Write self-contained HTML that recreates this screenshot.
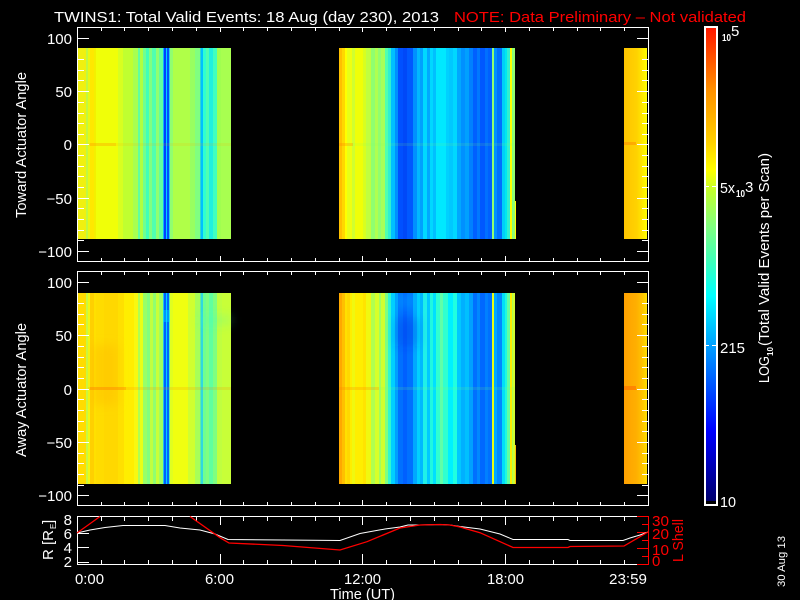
<!DOCTYPE html>
<html><head><meta charset="utf-8"><title>TWINS1</title>
<style>
html,body{margin:0;padding:0;background:#000;width:800px;height:600px;overflow:hidden}
svg{display:block}
text{font-family:"Liberation Sans",sans-serif;fill:#fff;font-size:15px}
.r text,text.r{fill:#f00}
.p1 rect{y:48px;height:191px}
.p2 rect{y:293px;height:191px}
</style></head><body>
<svg width="800" height="600" viewBox="0 0 800 600" xmlns="http://www.w3.org/2000/svg">
<defs>
<linearGradient id="cb" x1="0" y1="28" x2="0" y2="502" gradientUnits="userSpaceOnUse">
<stop offset="0" stop-color="#ff1800"/><stop offset=".13" stop-color="#ff9000"/><stop offset=".24" stop-color="#ffd000"/><stop offset=".3" stop-color="#ffff00"/><stop offset=".345" stop-color="#c0ff30"/><stop offset=".42" stop-color="#80ff80"/><stop offset=".49" stop-color="#40ffb8"/><stop offset=".565" stop-color="#00ffff"/><stop offset=".67" stop-color="#00a0ff"/><stop offset=".85" stop-color="#0000ff"/><stop offset="1" stop-color="#00006a"/>
</linearGradient>
<linearGradient id="e1" x1="624" x2="647" y1="0" y2="0" gradientUnits="userSpaceOnUse"><stop offset="0" stop-color="#ffc400"/><stop offset=".55" stop-color="#ffd200"/><stop offset=".8" stop-color="#ffe800"/><stop offset="1" stop-color="#ffff00"/></linearGradient>
<linearGradient id="e2" x1="624" x2="647" y1="0" y2="0" gradientUnits="userSpaceOnUse"><stop offset="0" stop-color="#ffa000"/><stop offset=".55" stop-color="#ffb000"/><stop offset=".8" stop-color="#ffc400"/><stop offset="1" stop-color="#ffe000"/></linearGradient>
<filter id="soft" x="-50%" y="-50%" width="200%" height="200%"><feGaussianBlur stdDeviation="5"/></filter>
<clipPath id="c2"><rect x="78" y="293" width="437" height="191"/></clipPath>
</defs>
<g shape-rendering="crispEdges">
<g class="p1">
<rect x="78" width="8" fill="#f0f010"/><rect x="86" width="2" fill="#c0f840"/><rect x="88" width="2" fill="#e8f810"/><rect x="90" width="4" fill="#ffe800"/><rect x="94" width="2" fill="#f4f000"/><rect x="96" width="22" fill="#f0ff08"/><rect x="118" width="5" fill="#d8ff20"/><rect x="123" width="10" fill="#c0ff30"/><rect x="133" width="5" fill="#a8ff50"/><rect x="138" width="2" fill="#60ffa0"/><rect x="140" width="3" fill="#b0ff40"/><rect x="143" width="3" fill="#70ff90"/><rect x="146" width="3" fill="#40ffb8"/><rect x="149" width="3" fill="#80ff80"/><rect x="152" width="4" fill="#50ffb0"/><rect x="156" width="3" fill="#90ff70"/><rect x="159" width="4" fill="#60ffa0"/><rect x="163" width="1" fill="#10b0ff"/><rect x="164" width="2" fill="#0040ff"/><rect x="166" width="1" fill="#00d0ff"/><rect x="167" width="2" fill="#0050ff"/><rect x="169" width="1" fill="#30d0e0"/><rect x="170" width="3" fill="#90ff70"/><rect x="173" width="17" fill="#b0ff48"/><rect x="190" width="5" fill="#98ff60"/><rect x="195" width="5" fill="#80ff80"/><rect x="200" width="1" fill="#30d8d0"/><rect x="201" width="2" fill="#00c0ff"/><rect x="203" width="3" fill="#30ffd0"/><rect x="206" width="3" fill="#50ffb0"/><rect x="209" width="4" fill="#20f0e0"/><rect x="213" width="4" fill="#40ffc0"/><rect x="217" width="4" fill="#a0ff50"/><rect x="221" width="10" fill="#a8ff50"/>
<rect x="339" width="3" fill="#ffc000"/><rect x="342" width="3" fill="#ffd800"/><rect x="345" width="2" fill="#ffff00"/><rect x="347" width="3" fill="#e8ff18"/><rect x="350" width="2" fill="#f0ff10"/><rect x="352" width="3" fill="#d0ff30"/><rect x="355" width="8" fill="#f0ff08"/><rect x="363" width="3" fill="#d8ff20"/><rect x="366" width="5" fill="#c0ff40"/><rect x="371" width="4" fill="#90ff70"/><rect x="375" width="3" fill="#b0ff50"/><rect x="378" width="3" fill="#90ff70"/><rect x="381" width="4" fill="#a8ff58"/><rect x="385" width="3" fill="#50ffb0"/><rect x="388" width="3" fill="#30f0d0"/><rect x="391" width="4" fill="#00c0ff"/><rect x="395" width="3" fill="#0090ff"/><rect x="398" width="5" fill="#0050ff"/><rect x="403" width="4" fill="#0048f8"/><rect x="407" width="6" fill="#0058ff"/><rect x="413" width="4" fill="#0090ff"/><rect x="417" width="3" fill="#00b8ff"/><rect x="420" width="3" fill="#00a0ff"/><rect x="423" width="4" fill="#00d8ff"/><rect x="427" width="3" fill="#00a8ff"/><rect x="430" width="3" fill="#00d8ff"/><rect x="433" width="3" fill="#00c0ff"/><rect x="436" width="10" fill="#00e8ff"/><rect x="446" width="3" fill="#00d0ff"/><rect x="449" width="4" fill="#00c8ff"/><rect x="453" width="4" fill="#00d8ff"/><rect x="457" width="4" fill="#00a8ff"/><rect x="461" width="4" fill="#0090ff"/><rect x="465" width="4" fill="#00a0ff"/><rect x="469" width="4" fill="#0080ff"/><rect x="473" width="4" fill="#0060ff"/><rect x="477" width="3" fill="#0078ff"/><rect x="480" width="5" fill="#0058ff"/><rect x="485" width="3" fill="#0070ff"/><rect x="488" width="4" fill="#0060ff"/><rect x="492" width="2" fill="#90ff70"/><rect x="494" width="3" fill="#0090ff"/><rect x="497" width="5" fill="#0070ff"/><rect x="502" width="3" fill="#00d0f8"/><rect x="505" width="2" fill="#00e8f0"/><rect x="507" width="3" fill="#30f0d0"/><rect x="510" width="2" fill="#ffff00"/><rect x="512" width="1" fill="#80ff80"/><rect x="513" width="2" fill="#90ff70"/>
<rect x="515" style="y:201px;height:38px" width="1" fill="#ffff00"/>
<rect x="624" width="23" fill="url(#e1)"/>
</g>
<g class="p2">
<rect x="78" width="8" fill="#ffdc00"/><rect x="86" width="2" fill="#c8f840"/><rect x="88" width="2" fill="#f0f810"/><rect x="90" width="4" fill="#ffd000"/><rect x="94" width="2" fill="#ffe000"/><rect x="96" width="8" fill="#ffdc00"/><rect x="104" width="14" fill="#ffd800"/><rect x="118" width="6" fill="#ffe000"/><rect x="124" width="10" fill="#ffee00"/><rect x="134" width="4" fill="#f8f810"/><rect x="138" width="2" fill="#b0ff50"/><rect x="140" width="3" fill="#e8ff18"/><rect x="143" width="4" fill="#98ff68"/><rect x="147" width="3" fill="#80ff80"/><rect x="150" width="3" fill="#c0ff40"/><rect x="153" width="3" fill="#90ff70"/><rect x="156" width="3" fill="#c8ff38"/><rect x="159" width="4" fill="#a0ff60"/><rect x="163" width="1" fill="#20c0f0"/><rect x="164" width="2" fill="#0060ff"/><rect x="166" width="1" fill="#00d0ff"/><rect x="167" width="2" fill="#0068ff"/><rect x="169" width="1" fill="#60f0a0"/><rect x="170" width="3" fill="#e0ff20"/><rect x="173" width="15" fill="#f0ff10"/><rect x="188" width="7" fill="#d0ff30"/><rect x="195" width="5" fill="#a8ff58"/><rect x="200" width="1" fill="#60f0a0"/><rect x="201" width="2" fill="#30d8e0"/><rect x="203" width="3" fill="#70ff90"/><rect x="206" width="3" fill="#80ff80"/><rect x="209" width="4" fill="#60ffa0"/><rect x="213" width="4" fill="#80ff80"/><rect x="217" width="5" fill="#c0ff40"/><rect x="222" width="9" fill="#c8ff38"/>
<rect x="339" width="3" fill="#ffa800"/><rect x="342" width="3" fill="#ffc000"/><rect x="345" width="2" fill="#ffe000"/><rect x="347" width="3" fill="#ffd800"/><rect x="350" width="2" fill="#ffee00"/><rect x="352" width="3" fill="#f0f810"/><rect x="355" width="8" fill="#ffee00"/><rect x="363" width="3" fill="#ffe400"/><rect x="366" width="5" fill="#f0f810"/><rect x="371" width="4" fill="#b0ff50"/><rect x="375" width="4" fill="#d8ff28"/><rect x="379" width="2" fill="#a0ff60"/><rect x="381" width="4" fill="#d0ff30"/><rect x="385" width="3" fill="#80ff80"/><rect x="388" width="3" fill="#30f8d0"/><rect x="391" width="4" fill="#00d0ff"/><rect x="395" width="3" fill="#00a0ff"/><rect x="398" width="5" fill="#0070ff"/><rect x="403" width="4" fill="#0060ff"/><rect x="407" width="6" fill="#0070ff"/><rect x="413" width="4" fill="#00a8ff"/><rect x="417" width="3" fill="#00d0ff"/><rect x="420" width="3" fill="#00b8ff"/><rect x="423" width="4" fill="#20f0e8"/><rect x="427" width="3" fill="#00c8ff"/><rect x="430" width="3" fill="#20f8e0"/><rect x="433" width="3" fill="#00e0ff"/><rect x="436" width="4" fill="#30ffd0"/><rect x="440" width="3" fill="#60ffa8"/><rect x="443" width="5" fill="#30ffd0"/><rect x="448" width="5" fill="#00f0ff"/><rect x="453" width="4" fill="#20ffe0"/><rect x="457" width="4" fill="#00c8ff"/><rect x="461" width="4" fill="#00b0ff"/><rect x="465" width="4" fill="#00c0ff"/><rect x="469" width="4" fill="#00a0ff"/><rect x="473" width="4" fill="#0070ff"/><rect x="477" width="3" fill="#0088ff"/><rect x="480" width="5" fill="#0068ff"/><rect x="485" width="3" fill="#0080ff"/><rect x="488" width="4" fill="#0070ff"/><rect x="492" width="2" fill="#e8ff10"/><rect x="494" width="3" fill="#00a8ff"/><rect x="497" width="5" fill="#0088ff"/><rect x="502" width="3" fill="#00e0f8"/><rect x="505" width="2" fill="#20f8e0"/><rect x="507" width="3" fill="#60ffa0"/><rect x="510" width="2" fill="#ffee00"/><rect x="512" width="1" fill="#b0ff50"/><rect x="513" width="2" fill="#d0ff30"/>
<rect x="515" width="1" style="y:445px;height:39px" fill="#ffc000"/>
<rect x="624" width="23" fill="url(#e2)"/>
</g>
</g>
<!-- soft vertical structure, clipped to the data area -->
<g clip-path="url(#c2)"><g filter="url(#soft)">
<rect x="92" y="345" width="26" height="60" fill="#ffb000" opacity=".3"/>
<rect x="396" y="318" width="22" height="28" fill="#0030e0" opacity=".28"/>
<rect x="396" y="293" width="22" height="16" fill="#00c0ff" opacity=".3"/>
<rect x="200" y="316" width="31" height="8" fill="#40ffc0" opacity=".3"/>
</g></g>
<g shape-rendering="crispEdges">
<rect x="163" y="310" width="7" height="12" fill="#00f0ff" opacity=".35"/>
<rect x="88" y="143" width="143" height="3" fill="#ffa000" opacity=".13"/>
<rect x="90" y="143" width="26" height="3" fill="#ff9000" opacity=".25"/>
<rect x="339" y="143" width="14" height="3" fill="#ff8000" opacity=".3"/>
<rect x="353" y="143" width="162" height="3" fill="#80ff60" opacity=".12"/>
<rect x="624" y="142" width="12" height="3" fill="#ff8000" opacity=".45"/>
<rect x="88" y="387" width="143" height="3" fill="#ff8000" opacity=".18"/>
<rect x="90" y="387" width="36" height="3" fill="#ff8000" opacity=".3"/>
<rect x="339" y="387" width="40" height="3" fill="#ff8000" opacity=".25"/>
<rect x="379" y="387" width="136" height="3" fill="#80ff60" opacity=".14"/>
<rect x="624" y="386" width="12" height="4" fill="#ff6000" opacity=".5"/>
<!-- colour bar -->
<rect x="704" y="26" width="14" height="480" fill="#fff"/>
<rect x="706" y="28" width="10" height="476" fill="#000"/>
<rect x="706" y="28" width="10" height="473" fill="url(#cb)"/>
<rect x="706" y="186" width="3" height="1" fill="#fff"/><rect x="712" y="186" width="4" height="1" fill="#fff"/>
<rect x="706" y="345" width="3" height="1" fill="#fff"/><rect x="712" y="345" width="4" height="1" fill="#fff"/>
</g>
<!-- frames and ticks -->
<g fill="none" stroke="#fff" stroke-width="1" shape-rendering="crispEdges">
<path d="M77 27.5H648M77 261.5H648M77 271.5H648M77 505.5H648M77.5 27V262M77.5 271V506M648.5 27V262M648.5 271V506"/>
<path d="M101.5 28v3M124.5 28v3M148.5 28v3M172.5 28v3M196.5 28v3M220.5 28v4M243.5 28v3M267.5 28v3M291.5 28v3M315.5 28v3M339.5 28v3M362.5 28v4M386.5 28v3M410.5 28v3M434.5 28v3M458.5 28v3M481.5 28v3M505.5 28v4M529.5 28v3M553.5 28v3M577.5 28v3M600.5 28v3M624.5 28v3"/>
<path d="M101.5 258v3M124.5 258v3M148.5 258v3M172.5 258v3M196.5 258v3M220.5 256v5M243.5 258v3M267.5 258v3M291.5 258v3M315.5 258v3M339.5 258v3M362.5 256v5M386.5 258v3M410.5 258v3M434.5 258v3M458.5 258v3M481.5 258v3M505.5 256v5M529.5 258v3M553.5 258v3M577.5 258v3M600.5 258v3M624.5 258v3"/>
<path d="M101.5 272v3M124.5 272v3M148.5 272v3M172.5 272v3M196.5 272v3M220.5 272v4M243.5 272v3M267.5 272v3M291.5 272v3M315.5 272v3M339.5 272v3M362.5 272v4M386.5 272v3M410.5 272v3M434.5 272v3M458.5 272v3M481.5 272v3M505.5 272v4M529.5 272v3M553.5 272v3M577.5 272v3M600.5 272v3M624.5 272v3"/>
<path d="M101.5 502v3M124.5 502v3M148.5 502v3M172.5 502v3M196.5 502v3M220.5 500v5M243.5 502v3M267.5 502v3M291.5 502v3M315.5 502v3M339.5 502v3M362.5 500v5M386.5 502v3M410.5 502v3M434.5 502v3M458.5 502v3M481.5 502v3M505.5 500v5M529.5 502v3M553.5 502v3M577.5 502v3M600.5 502v3M624.5 502v3"/>
<path d="M78 38.5h11M78 59.5h6M78 70.5h6M78 80.5h6M78 91.5h11M78 102.5h6M78 113.5h6M78 123.5h6M78 134.5h6M78 144.5h11M78 155.5h6M78 166.5h6M78 176.5h6M78 187.5h6M78 198.5h11M78 208.5h6M78 219.5h6M78 230.5h6M78 240.5h6M78 251.5h11"/>
<path d="M637 38.5h11M642 59.5h6M642 70.5h6M642 80.5h6M637 91.5h11M642 102.5h6M642 113.5h6M642 123.5h6M642 134.5h6M637 144.5h11M642 155.5h6M642 166.5h6M642 176.5h6M642 187.5h6M637 198.5h11M642 208.5h6M642 219.5h6M642 230.5h6M642 240.5h6M637 251.5h11"/>
<path d="M78 282.5h11M78 303.5h6M78 314.5h6M78 324.5h6M78 335.5h11M78 346.5h6M78 357.5h6M78 367.5h6M78 378.5h6M78 389.5h11M78 399.5h6M78 410.5h6M78 421.5h6M78 431.5h6M78 442.5h11M78 453.5h6M78 463.5h6M78 474.5h6M78 485.5h6M78 495.5h11"/>
<path d="M637 282.5h11M642 303.5h6M642 314.5h6M642 324.5h6M637 335.5h11M642 346.5h6M642 357.5h6M642 367.5h6M642 378.5h6M637 389.5h11M642 399.5h6M642 410.5h6M642 421.5h6M642 431.5h6M637 442.5h11M642 453.5h6M642 463.5h6M642 474.5h6M642 485.5h6M637 495.5h11"/>
<!-- bottom panel -->
<path d="M77 516.5H648M77 564.5H648M77.5 516V565"/>
<path d="M101.5 517v4M124.5 517v4M148.5 517v4M172.5 517v4M196.5 517v4M220.5 517v8M243.5 517v4M267.5 517v4M291.5 517v4M315.5 517v4M339.5 517v4M362.5 517v8M386.5 517v4M410.5 517v4M434.5 517v4M458.5 517v4M481.5 517v4M505.5 517v8M529.5 517v4M553.5 517v4M577.5 517v4M600.5 517v4M624.5 517v4"/>
<path d="M101.5 560v4M124.5 560v4M148.5 560v4M172.5 560v4M196.5 560v4M220.5 554v10M243.5 560v4M267.5 560v4M291.5 560v4M315.5 560v4M339.5 560v4M362.5 554v10M386.5 560v4M410.5 560v4M434.5 560v4M458.5 560v4M481.5 560v4M505.5 554v10M529.5 560v4M553.5 560v4M577.5 560v4M600.5 560v4M624.5 560v4"/>
<path d="M78 533.5h11M78 547.5h11M78 562.5h11"/>
</g>
<g fill="none" stroke="#f00" stroke-width="1" shape-rendering="crispEdges">
<path d="M648.5 516V565M637 516.5h11M642 524.5h6M637 532.5h11M642 540.5h6M637 548.5h11M642 556.5h6M637 564.5h11"/>
</g>
<polyline fill="none" stroke="#fff" stroke-width="1" points="77,533 90,530 105,527.5 123,525.5 165,525.5 180,528 200,530 215,534 228,539.5 283,540 340,540.5 360,533.5 385,529 400,527 408,525 420,525 440,524.5 450,525 460,526.5 480,529 500,534 513,539.5 568,539.5 570,540.5 623,540.5 630,538 640,535 648,532"/>
<polyline fill="none" stroke="#f00" stroke-width="1.3" points="77,533 100,516.5"/>
<polyline fill="none" stroke="#f00" stroke-width="1.3" points="190,516.5 220,537.7 229,543 283,545.5 340,550 367,541.7 400,528 420,525 440,524.5 450,525 460,527 480,532.7 513,547.5 568,547.5 570,546.5 624,546 648,532"/>
<!-- title -->
<text x="54" y="22" textLength="385" lengthAdjust="spacingAndGlyphs">TWINS1: Total Valid Events: 18 Aug (day 230), 2013</text>
<text class="r" x="454" y="22" textLength="292" lengthAdjust="spacingAndGlyphs">NOTE: Data Preliminary – Not validated</text>
<!-- y labels -->
<g text-anchor="end">
<text x="72" y="44">100</text><text x="72" y="97">50</text><text x="72" y="150">0</text><text x="72" y="204">−50</text><text x="72" y="257">−100</text>
<text x="72" y="288">100</text><text x="72" y="341">50</text><text x="72" y="395">0</text><text x="72" y="448">−50</text><text x="72" y="501">−100</text>
<text x="72" y="525">8</text><text x="72" y="539">6</text><text x="72" y="553">4</text><text x="72" y="567">2</text>
</g>
<text transform="translate(26,218) rotate(-90)" textLength="146" lengthAdjust="spacingAndGlyphs">Toward Actuator Angle</text>
<text transform="translate(26,457) rotate(-90)" textLength="134" lengthAdjust="spacingAndGlyphs">Away Actuator Angle</text>
<text transform="translate(53,560) rotate(-90)" textLength="30" lengthAdjust="spacingAndGlyphs">R [R</text>
<text transform="translate(56,529) rotate(-90)" style="font-size:8px">E</text>
<text transform="translate(53,524) rotate(-90)">]</text>
<!-- x labels -->
<text x="75" y="584" textLength="29" lengthAdjust="spacingAndGlyphs">0:00</text>
<text x="205" y="584" textLength="29" lengthAdjust="spacingAndGlyphs">6:00</text>
<text x="344" y="584" textLength="37" lengthAdjust="spacingAndGlyphs">12:00</text>
<text x="487" y="584" textLength="37" lengthAdjust="spacingAndGlyphs">18:00</text>
<text x="609" y="584" textLength="38" lengthAdjust="spacingAndGlyphs">23:59</text>
<text x="330" y="599" textLength="65" lengthAdjust="spacingAndGlyphs">Time (UT)</text>
<!-- right red labels -->
<g class="r">
<text x="652" y="526" textLength="17" lengthAdjust="spacingAndGlyphs">30</text>
<text x="652" y="539" textLength="17" lengthAdjust="spacingAndGlyphs">20</text>
<text x="652" y="555" textLength="17" lengthAdjust="spacingAndGlyphs">10</text>
<text x="652" y="566">0</text>
<text transform="translate(683,562) rotate(-90)" textLength="43" lengthAdjust="spacingAndGlyphs">L Shell</text>
</g>
<!-- colour bar labels -->
<text x="722" y="41" style="font-size:10px;font-weight:bold" textLength="9" lengthAdjust="spacingAndGlyphs">10</text>
<text x="731" y="36">5</text>
<text x="720" y="193" textLength="15" lengthAdjust="spacingAndGlyphs">5x</text>
<text x="736" y="197" style="font-size:10px;font-weight:bold" textLength="9" lengthAdjust="spacingAndGlyphs">10</text>
<text x="745" y="192">3</text>
<text x="720" y="353" textLength="25" lengthAdjust="spacingAndGlyphs">215</text>
<text x="720" y="507" textLength="16" lengthAdjust="spacingAndGlyphs">10</text>
<text transform="translate(769,383) rotate(-90)" textLength="27" lengthAdjust="spacingAndGlyphs">LOG</text>
<text transform="translate(773,356) rotate(-90)" style="font-size:8px;font-weight:bold" textLength="9" lengthAdjust="spacingAndGlyphs">10</text>
<text transform="translate(769,346) rotate(-90)" textLength="193" lengthAdjust="spacingAndGlyphs">(Total Valid Events per Scan)</text>
<text transform="translate(785,587) rotate(-90)" style="font-size:11px" textLength="51" lengthAdjust="spacingAndGlyphs">30 Aug 13</text>
</svg>
</body></html>
